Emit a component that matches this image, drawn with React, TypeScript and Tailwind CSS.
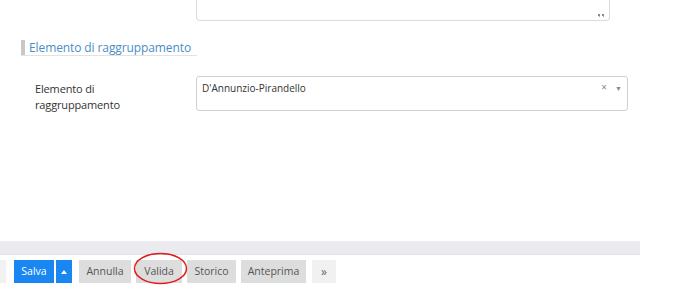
import React from "react";

type Btn = { label: string; w: string };

const actions: Btn[] = [
  { label: "Annulla", w: "w-[52px]" },
  { label: "Valida", w: "w-[46px]" },
  { label: "Storico", w: "w-[49px]" },
  { label: "Anteprima", w: "w-[65px]" },
];

export default function App() {
  return (
    <div
      className="relative w-[687px] h-[295px] overflow-hidden bg-white text-[#333]"
      style={{ fontFamily: '"Open Sans", "Noto Sans", sans-serif' }}
    >
      {/* fine del campo di testo precedente */}
      <div className="relative ml-[196px] -mt-[40px] h-[61px] w-[414px] rounded-b-[4px] border-x border-b border-[#dcdcdc]">
        <svg
          className="absolute right-[4px] bottom-[2px]"
          width="7"
          height="4"
          viewBox="0 0 7 4"
        >
          <rect x="0" y="0" width="2" height="2" fill="#888" />
          <rect x="4" y="0" width="2" height="2" fill="#888" />
          <rect x="1" y="2" width="1" height="1" fill="#aaa" />
          <rect x="5" y="2" width="1" height="1" fill="#aaa" />
        </svg>
      </div>

      {/* titolo sezione */}
      <div className="mt-[19px] ml-[21px] w-[176px] border-b border-[#e2e2e2]">
        <div className="border-l-[4px] border-[#c8c8c8] pl-[4px] h-[15px] whitespace-nowrap text-[12px] leading-[15px] tracking-[-0.1px] text-[#4a8dc4]">
          Elemento di raggruppamento
        </div>
      </div>

      {/* riga campo */}
      <div className="mt-[20px] flex items-start">
        <div className="ml-[35px] w-[161px] pt-[5px] text-[11px] leading-[16px] tracking-[-0.15px] text-[#333]">
          Elemento di
          <br />
          raggruppamento
        </div>
        <div className="relative h-[35px] w-[432px] rounded-[3px] border border-[#d0d0d0] bg-white">
          <div className="pl-[5px] pt-[4px] text-[10px] leading-[14px] text-[#333]">
            D'Annunzio-Pirandello
          </div>
          <span className="absolute right-[20px] top-[3px] text-[10px] leading-[14px] text-[#888]">
            ×
          </span>
          <span className="absolute right-[5px] top-[7px] text-[7px] leading-[10px] text-[#888]">
            ▼
          </span>
        </div>
      </div>

      {/* barra azioni */}
      <div className="mt-[128px] h-[14px] w-[640px] bg-[#ebebef] border-b border-[#e2e2e6]" />
      <div className="mt-[5px] flex items-center h-[23px]">
        <div className="h-[23px] w-[6px] bg-[#f1f1f1]" />
        <button className="ml-[8px] h-[23px] w-[40px] bg-[#1a86f2] text-[10.5px] text-white">
          Salva
        </button>
        <button className="ml-[2px] h-[23px] w-[16px] bg-[#1a86f2] flex items-center justify-center">
          <svg width="6" height="4" viewBox="0 0 6 4">
            <path d="M0 4 L3 0 L6 4 Z" fill="#fff" />
          </svg>
        </button>
        <div className="ml-[7px] flex gap-[5px]">
          {actions.map((a) => (
            <button
              key={a.label}
              className={`${a.w} h-[23px] bg-[#dddddd] text-[10.5px] text-[#555]`}
            >
              {a.label}
            </button>
          ))}
        </div>
        <button className="ml-[6px] h-[23px] w-[24px] bg-[#f1f1f1] text-[12px] text-[#666]">
          »
        </button>
      </div>

      {/* annotazione */}
      <svg
        className="absolute left-[133px] top-[252px]"
        width="55"
        height="33"
        viewBox="0 0 55 33"
      >
        <ellipse
          cx="27.5"
          cy="16.5"
          rx="26"
          ry="15"
          fill="none"
          stroke="#e01b1b"
          strokeWidth="1.5"
        />
      </svg>
    </div>
  );
}
